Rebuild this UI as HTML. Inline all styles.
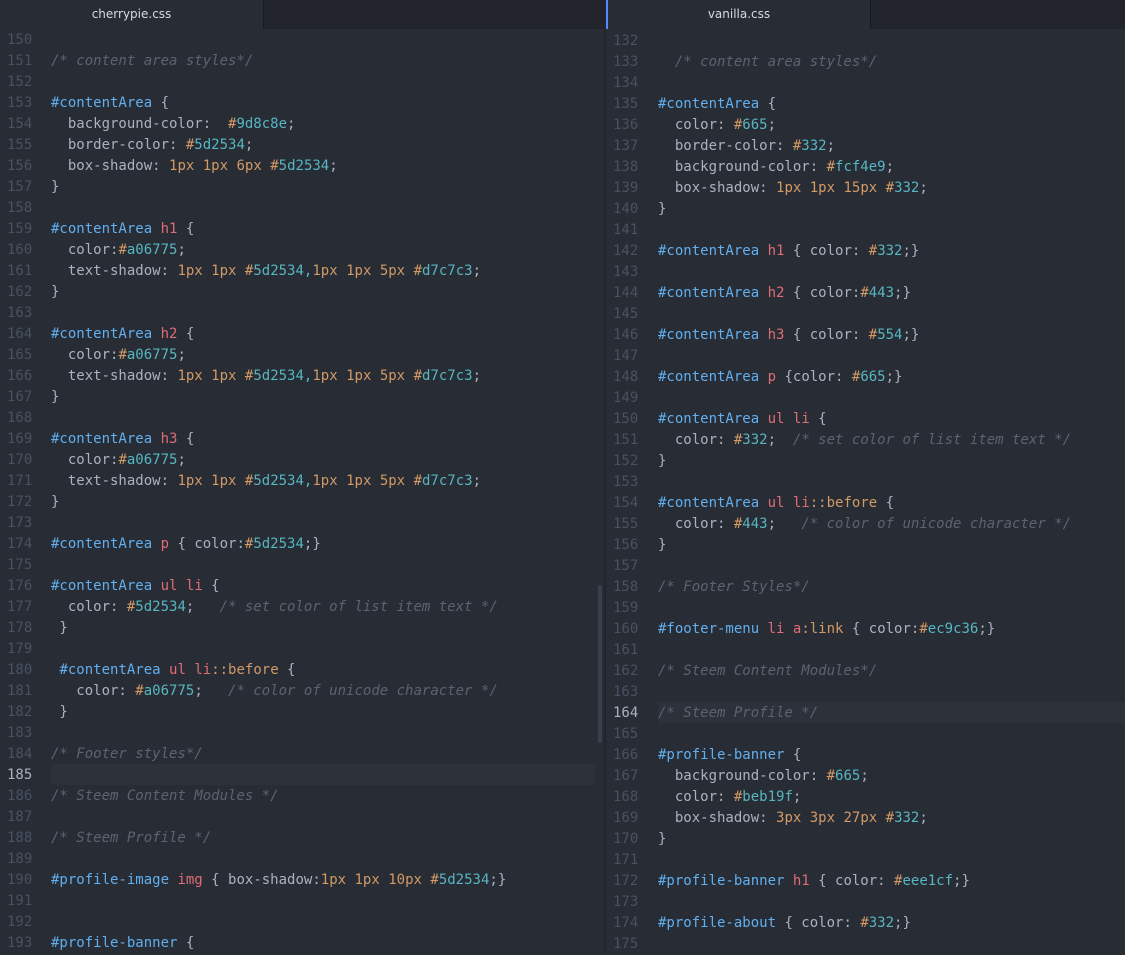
<!DOCTYPE html>
<html><head><meta charset="utf-8"><style>
*{margin:0;padding:0;box-sizing:border-box}
body{width:1125px;height:953px;background:#282c34;overflow:hidden;position:relative;font-family:"DejaVu Sans Mono","Liberation Mono",monospace;font-size:14px;color:#abb2bf}
.tabbar{position:absolute;top:0;height:29px;background:#21252b}
.tab{position:absolute;top:0;height:29px;background:#282c34;color:#d7dae0;font-family:"DejaVu Sans","Liberation Sans",sans-serif;font-size:12px;text-align:center;line-height:28px}
.ln{position:absolute;white-space:pre;height:21px;line-height:21px}
.num{color:#495162}
.cur{color:#abb2bf}
.hl{position:absolute;height:21px;background:#2c313a}
.c{color:#5c6370;font-style:italic}
.i{color:#61afef}.t{color:#e06c75}.h{color:#d19a66}.v{color:#56b6c2}.n{color:#d19a66}.o{color:#d19a66}
</style></head><body>
<div class="tabbar" style="left:0;width:605px"></div>
<div class="tab" style="left:0;width:263px">cherrypie.css</div>
<div style="position:absolute;left:263px;top:0;width:1px;height:29px;background:#181a1f"></div>
<div class="tabbar" style="left:607px;width:518px"></div>
<div class="tab" style="left:606px;width:264px;border-left:2px solid #528bff">vanilla.css</div>
<div style="position:absolute;left:870px;top:0;width:1px;height:29px;background:#181a1f"></div>
<div style="position:absolute;left:604px;top:0;width:2px;height:953px;background:#21252b"></div>
<div style="position:absolute;left:598px;top:585px;width:4px;height:158px;background:#3a3f4b;border-radius:2px"></div>

<div class="hl" style="left:51px;top:764px;width:544px"></div>
<div class="hl" style="left:658px;top:702px;width:467px"></div>

<div id="L"></div>
<div id="R"></div>
<script>
const H='<span class="h">#</span>';
const hex=s=>H+'<span class="v">'+s+'</span>';
const n=s=>'<span class="n">'+s+'</span>';
const c=s=>'<span class="c">'+s+'</span>';
const i=s=>'<span class="i">'+s+'</span>';
const t=s=>'<span class="t">'+s+'</span>';
const o=s=>'<span class="o">'+s+'</span>';
const ts=`  text-shadow: ${n('1px')} ${n('1px')} ${hex('5d2534')}<span class="v">,</span>${n('1px')} ${n('1px')} ${n('5px')} ${hex('d7c7c3')};`;
const L=[
'',c('/* content area styles*/'),'',
i('#contentArea')+' {',`  background-color:  ${hex('9d8c8e')};`,`  border-color: ${hex('5d2534')};`,`  box-shadow: ${n('1px')} ${n('1px')} ${n('6px')} ${hex('5d2534')};`,'}','',
i('#contentArea')+' '+t('h1')+' {',`  color:${hex('a06775')};`,ts,'}','',
i('#contentArea')+' '+t('h2')+' {',`  color:${hex('a06775')};`,ts,'}','',
i('#contentArea')+' '+t('h3')+' {',`  color:${hex('a06775')};`,ts,'}','',
i('#contentArea')+' '+t('p')+` { color:${hex('5d2534')};}`,'',
i('#contentArea')+' '+t('ul')+' '+t('li')+' {',`  color: ${hex('5d2534')};   `+c('/* set color of list item text */'),' }','',
' '+i('#contentArea')+' '+t('ul')+' '+t('li')+o('::before')+' {',`   color: ${hex('a06775')};   `+c('/* color of unicode character */'),' }','',
c('/* Footer styles*/'),'',c('/* Steem Content Modules */'),'',c('/* Steem Profile */'),'',
i('#profile-image')+' '+t('img')+` { box-shadow:${n('1px')} ${n('1px')} ${n('10px')} ${hex('5d2534')};}`,'','',
i('#profile-banner')+' {'
];
const R=[
'','  '+c('/* content area styles*/'),'',
i('#contentArea')+' {',`  color: ${hex('665')};`,`  border-color: ${hex('332')};`,`  background-color: ${hex('fcf4e9')};`,`  box-shadow: ${n('1px')} ${n('1px')} ${n('15px')} ${hex('332')};`,'}','',
i('#contentArea')+' '+t('h1')+` { color: ${hex('332')};}`,'',
i('#contentArea')+' '+t('h2')+` { color:${hex('443')};}`,'',
i('#contentArea')+' '+t('h3')+` { color: ${hex('554')};}`,'',
i('#contentArea')+' '+t('p')+` {color: ${hex('665')};}`,'',
i('#contentArea')+' '+t('ul')+' '+t('li')+' {',`  color: ${hex('332')};  `+c('/* set color of list item text */'),'}','',
i('#contentArea')+' '+t('ul')+' '+t('li')+o('::before')+' {',`  color: ${hex('443')};   `+c('/* color of unicode character */'),'}','',
c('/* Footer Styles*/'),'',
i('#footer-menu')+' '+t('li')+' '+t('a')+o(':link')+` { color:${hex('ec9c36')};}`,'',
c('/* Steem Content Modules*/'),'',c('/* Steem Profile */'),'',
i('#profile-banner')+' {',`  background-color: ${hex('665')};`,`  color: ${hex('beb19f')};`,`  box-shadow: ${n('3px')} ${n('3px')} ${n('27px')} ${hex('332')};`,'}','',
i('#profile-banner')+' '+t('h1')+` { color: ${hex('eee1cf')};}`,'',
i('#profile-about')+` { color: ${hex('332')};}`,''
];
let h='';
L.forEach((s,k)=>{const y=30+k*21;const num=150+k;
h+=`<div class="ln num ${num==185?'cur':''}" style="left:7px;top:${y}px">${num}</div><div class="ln" style="left:51px;top:${y}px">${s}</div>`;});
R.forEach((s,k)=>{const y=31+k*21;const num=132+k;
h+=`<div class="ln num ${num==164?'cur':''}" style="left:613px;top:${y}px">${num}</div><div class="ln" style="left:658px;top:${y}px">${s}</div>`;});
document.getElementById('L').innerHTML=h;
</script>
</body></html>
